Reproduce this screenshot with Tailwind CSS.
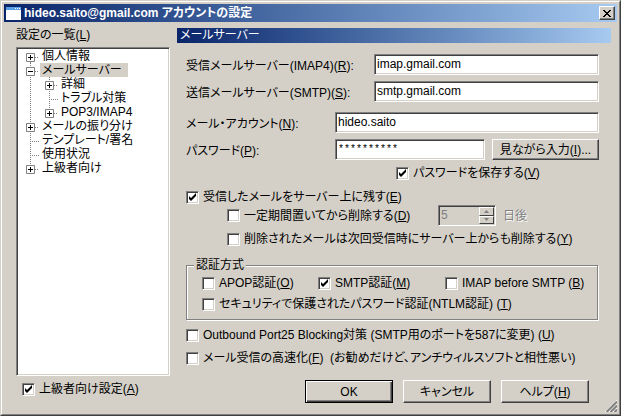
<!DOCTYPE html>
<html lang="ja">
<head>
    <meta charset="UTF-8">
    <meta name="viewport" content="width=device-width, initial-scale=1.0">
    <title>hideo.saito@gmail.com アカウントの設定</title>
    <script src="https://cdn.jsdelivr.net/npm/@tailwindcss/browser@4"></script>
</head>
<body class="bg-[#d4d0c8] text-black text-[12px] leading-[14px] font-['Liberation_Sans','Noto_Sans_CJK_JP',sans-serif] [font-feature-settings:'palt'] whitespace-nowrap">

    <!-- Shared shapes: tree expanders and the tick -->
    <svg class="hidden">
        <symbol id="line-v" viewBox="0 0 19 14"><path d="M12.5 0V14" stroke="#808080" stroke-dasharray="1 1"/></symbol>
        <symbol id="leaf" viewBox="0 0 22 14"><path d="M12.5 0V14M12 8.5H21" stroke="#808080" stroke-dasharray="1 1"/></symbol>
        <symbol id="leaf-last" viewBox="0 0 22 14"><path d="M12.5 0V9M12 8.5H21" stroke="#808080" stroke-dasharray="1 1"/></symbol>
        <symbol id="box" viewBox="0 0 22 14">
            <path d="M17 8.5H21" stroke="#808080" stroke-dasharray="1 1"/>
            <path d="M8.5 4.5h8v8h-8z" fill="#fff" stroke="#808080"/>
            <path d="M10 8.5h5" stroke="#000"/>
        </symbol>
        <symbol id="plus-first" viewBox="0 0 22 14"><path d="M12.5 13V14" stroke="#808080"/><use href="#box"/><path d="M12.5 6v5" stroke="#000"/></symbol>
        <symbol id="plus" viewBox="0 0 22 14"><path d="M12.5 0V14" stroke="#808080" stroke-dasharray="1 1"/><use href="#box"/><path d="M12.5 6v5" stroke="#000"/></symbol>
        <symbol id="plus-last" viewBox="0 0 22 14"><path d="M12.5 0V4" stroke="#808080" stroke-dasharray="1 1"/><use href="#box"/><path d="M12.5 6v5" stroke="#000"/></symbol>
        <symbol id="minus" viewBox="0 0 22 14"><path d="M12.5 0V14" stroke="#808080" stroke-dasharray="1 1"/><use href="#box"/></symbol>
        <symbol id="tick" viewBox="0 0 13 13"><path d="M3 5v3l2 2 5-5V2L5 7z" fill="#000"/></symbol>
    </svg>

    <div class="min-h-screen flex flex-col border border-t-[#d4d0c8] border-l-[#d4d0c8] border-r-[#404040] border-b-[#404040]">
        <div class="flex-1 flex flex-col border border-t-white border-l-white border-r-[#808080] border-b-[#808080] p-0.5">

            <!-- Title bar -->
            <header class="flex items-center h-[18px] pl-0.5 pr-0.5 bg-linear-to-r from-[#0a246a] to-[#a6caf0] text-white">
                <svg class="w-[15px] h-[13px]" viewBox="0 0 15 13" shape-rendering="crispEdges">
                    <path d="M0 0h15v13H0z" fill="#fff"/>
                    <path d="M0 0h15v3H0z" fill="#5aa0e8"/>
                    <path d="M9 1h1v1H9zM11 1h1v1h-1zM13 1h1v1h-1z" fill="#fff"/>
                </svg>
                <h1 class="flex-1 pl-[3px] font-bold">hideo.saito@gmail.com アカウントの設定</h1>
                <button type="button" aria-label="閉じる" class="flex items-center justify-center w-4 h-[14px] bg-[#d4d0c8] border border-t-white border-l-white border-r-[#404040] border-b-[#404040] shadow-[inset_-1px_-1px_0_#808080]">
                    <svg class="w-2 h-[7px]" viewBox="0 0 8 7" shape-rendering="crispEdges"><path d="M0 0h2v1h1v1h2V1h1V0h2v1H7v1H6v1H5v1h1v1h1v1h1v1H6V6H5V5H3v1H2v1H0V6h1V5h1V4h1V3H2V2H1V1H0z" fill="#000"/></svg>
                </button>
            </header>

            <div class="flex-1 flex gap-[7px] pt-1.5 pl-3 pr-1.5">

                <!-- Settings list -->
                <nav class="w-[154px] shrink-0 flex flex-col pb-4">
                    <span id="listLabel">設定の一覧(<u>L</u>)</span>
                    <ul aria-labelledby="listLabel" class="flex-1 mt-[5px] bg-white border border-t-[#808080] border-l-[#808080] border-r-white border-b-white shadow-[inset_1px_1px_0_#404040,inset_-1px_-1px_0_#d4d0c8] p-px">
                        <li class="flex"><svg class="w-[22px] h-[14px]"><use href="#plus-first"/></svg><span class="px-0.5">個人情報</span></li>
                        <li>
                            <div class="flex"><svg class="w-[22px] h-[14px]"><use href="#minus"/></svg><span class="pl-0.5 pr-1.5 bg-[#d4d0c8]">メールサーバー</span></div>
                            <ul>
                                <li class="flex"><svg class="w-[19px] h-[14px]"><use href="#line-v"/></svg><svg class="w-[22px] h-[14px]"><use href="#plus"/></svg><span class="px-0.5">詳細</span></li>
                                <li class="flex"><svg class="w-[19px] h-[14px]"><use href="#line-v"/></svg><svg class="w-[22px] h-[14px]"><use href="#leaf"/></svg><span class="px-0.5">トラブル対策</span></li>
                                <li class="flex"><svg class="w-[19px] h-[14px]"><use href="#line-v"/></svg><svg class="w-[22px] h-[14px]"><use href="#plus-last"/></svg><span class="px-0.5">POP3/IMAP4</span></li>
                            </ul>
                        </li>
                        <li class="flex"><svg class="w-[22px] h-[14px]"><use href="#plus"/></svg><span class="px-0.5">メールの振り分け</span></li>
                        <li class="flex"><svg class="w-[22px] h-[14px]"><use href="#leaf"/></svg><span class="px-0.5">テンプレート/署名</span></li>
                        <li class="flex"><svg class="w-[22px] h-[14px]"><use href="#leaf"/></svg><span class="px-0.5">使用状況</span></li>
                        <li class="flex"><svg class="w-[22px] h-[14px]"><use href="#plus-last"/></svg><span class="px-0.5">上級者向け</span></li>
                    </ul>
                    <label class="flex items-center gap-1 mt-1.5 pl-1.5">
                        <span class="grid"><input type="checkbox" checked class="peer [grid-area:1/1] appearance-none w-[13px] h-[13px] bg-white border border-t-[#808080] border-l-[#808080] border-r-white border-b-white shadow-[inset_1px_1px_0_#404040,inset_-1px_-1px_0_#d4d0c8]"><svg class="[grid-area:1/1] w-[13px] h-[13px] pointer-events-none invisible peer-checked:visible"><use href="#tick"/></svg></span>
                        <span>上級者向け設定(<u>A</u>)</span>
                    </label>
                </nav>

                <!-- Mail server page -->
                <main class="flex-1 min-w-0 flex flex-col">
                    <h2 class="h-[15px] pl-[3px] bg-linear-to-r from-[#0a246a] to-[#a6caf0] text-white">メールサーバー</h2>

                    <form class="flex flex-col pl-[9px] pr-3 pt-[11px]">
                        <div class="grid grid-cols-[188px_1fr] gap-y-1.5 items-center">
                            <label for="imap" class="pt-0.5">受信メールサーバー(IMAP4)(<u>R</u>):</label>
                            <input id="imap" type="text" value="imap.gmail.com" class="w-full h-[21px] pl-0.5 pb-px bg-white border border-t-[#808080] border-l-[#808080] border-r-white border-b-white shadow-[inset_1px_1px_0_#404040,inset_-1px_-1px_0_#d4d0c8] outline-none">
                            <label for="smtp" class="pt-0.5">送信メールサーバー(SMTP)(<u>S</u>):</label>
                            <input id="smtp" type="text" value="smtp.gmail.com" class="w-full h-[21px] pl-0.5 pb-px bg-white border border-t-[#808080] border-l-[#808080] border-r-white border-b-white shadow-[inset_1px_1px_0_#404040,inset_-1px_-1px_0_#d4d0c8] outline-none">
                        </div>

                        <div class="grid grid-cols-[149px_1fr] gap-y-1.5 items-center mt-2.5">
                            <label for="account" class="pt-0.5">メール・アカウント(<u>N</u>):</label>
                            <input id="account" type="text" value="hideo.saito" class="w-full h-[21px] pl-0.5 pb-px bg-white border border-t-[#808080] border-l-[#808080] border-r-white border-b-white shadow-[inset_1px_1px_0_#404040,inset_-1px_-1px_0_#d4d0c8] outline-none">
                            <label for="password" class="pt-0.5">パスワード(<u>P</u>):</label>
                            <div class="flex gap-[7px]">
                                <input id="password" type="text" value="**********" class="flex-1 min-w-0 h-[21px] pl-0.5 font-['Liberation_Mono',monospace] text-[10px] bg-white border border-t-[#808080] border-l-[#808080] border-r-white border-b-white shadow-[inset_1px_1px_0_#404040,inset_-1px_-1px_0_#d4d0c8] outline-none">
                                <button type="button" class="w-[107px] h-[21px] border border-t-white border-l-white border-r-[#404040] border-b-[#404040] shadow-[inset_-1px_-1px_0_#808080]">見ながら入力(<u>I</u>)...</button>
                            </div>
                        </div>

                        <label class="flex items-center gap-1 mt-1.5 pl-[210px]">
                            <span class="grid"><input type="checkbox" checked class="peer [grid-area:1/1] appearance-none w-[13px] h-[13px] bg-white border border-t-[#808080] border-l-[#808080] border-r-white border-b-white shadow-[inset_1px_1px_0_#404040,inset_-1px_-1px_0_#d4d0c8]"><svg class="[grid-area:1/1] w-[13px] h-[13px] pointer-events-none invisible peer-checked:visible"><use href="#tick"/></svg></span>
                            <span>パスワードを保存する(<u>V</u>)</span>
                        </label>

                        <label class="flex items-center gap-1 mt-2.5">
                            <span class="grid"><input type="checkbox" checked class="peer [grid-area:1/1] appearance-none w-[13px] h-[13px] bg-white border border-t-[#808080] border-l-[#808080] border-r-white border-b-white shadow-[inset_1px_1px_0_#404040,inset_-1px_-1px_0_#d4d0c8]"><svg class="[grid-area:1/1] w-[13px] h-[13px] pointer-events-none invisible peer-checked:visible"><use href="#tick"/></svg></span>
                            <span>受信したメールをサーバー上に残す(<u>E</u>)</span>
                        </label>
                        <div class="grid grid-cols-[211px_58px_auto] items-center mt-px pl-[41px]">
                            <label class="flex items-center gap-1">
                                <input type="checkbox" class="appearance-none w-[13px] h-[13px] bg-white border border-t-[#808080] border-l-[#808080] border-r-white border-b-white shadow-[inset_1px_1px_0_#404040,inset_-1px_-1px_0_#d4d0c8]">
                                <span>一定期間置いてから削除する(<u>D</u>)</span>
                            </label>
                            <div class="flex h-[21px] border border-t-[#808080] border-l-[#808080] border-r-white border-b-white shadow-[inset_1px_1px_0_#404040] p-px">
                                <input id="days" type="text" value="5" disabled class="flex-1 min-w-0 pl-px pb-0.5 text-[#808080]">
                                <div class="flex flex-col w-[15px]">
                                    <button type="button" disabled aria-label="増やす" class="flex-1 flex items-center justify-center border border-t-white border-l-white border-r-[#404040] border-b-[#404040]"><svg class="w-[5px] h-[3px]" viewBox="0 0 5 3"><path d="M2.500 0L5 3H0z" fill="#808080"/></svg></button>
                                    <button type="button" disabled aria-label="減らす" class="flex-1 flex items-center justify-center border border-t-white border-l-white border-r-[#404040] border-b-[#404040]"><svg class="w-[5px] h-[3px]" viewBox="0 0 5 3"><path d="M0 0h5L2.500 3z" fill="#808080"/></svg></button>
                                </div>
                            </div>
                            <label for="days" class="pl-[7px] text-[#808080] [text-shadow:1px_1px_0_#fff]">日後</label>
                        </div>
                        <label class="flex items-center gap-1 mt-1.5 pl-[41px]">
                            <input type="checkbox" class="appearance-none w-[13px] h-[13px] bg-white border border-t-[#808080] border-l-[#808080] border-r-white border-b-white shadow-[inset_1px_1px_0_#404040,inset_-1px_-1px_0_#d4d0c8]">
                            <span>削除されたメールは次回受信時にサーバー上からも削除する(<u>Y</u>)</span>
                        </label>

                        <!-- Authentication -->
                        <fieldset class="mt-3 mr-px border border-[#808080] shadow-[1px_1px_0_#fff,inset_1px_1px_0_#fff] pl-[15px] pt-1 pb-2">
                            <legend class="-ml-2 px-0.5 bg-[#d4d0c8]">認証方式</legend>
                            <div class="grid grid-cols-[116px_127px_auto]">
                                <label class="flex items-center gap-1">
                                    <input type="checkbox" class="appearance-none w-[13px] h-[13px] bg-white border border-t-[#808080] border-l-[#808080] border-r-white border-b-white shadow-[inset_1px_1px_0_#404040,inset_-1px_-1px_0_#d4d0c8]">
                                    <span>APOP認証(<u>O</u>)</span>
                                </label>
                                <label class="flex items-center gap-1">
                                    <span class="grid"><input type="checkbox" checked class="peer [grid-area:1/1] appearance-none w-[13px] h-[13px] bg-white border border-t-[#808080] border-l-[#808080] border-r-white border-b-white shadow-[inset_1px_1px_0_#404040,inset_-1px_-1px_0_#d4d0c8]"><svg class="[grid-area:1/1] w-[13px] h-[13px] pointer-events-none invisible peer-checked:visible"><use href="#tick"/></svg></span>
                                    <span>SMTP認証(<u>M</u>)</span>
                                </label>
                                <label class="flex items-center gap-1">
                                    <input type="checkbox" class="appearance-none w-[13px] h-[13px] bg-white border border-t-[#808080] border-l-[#808080] border-r-white border-b-white shadow-[inset_1px_1px_0_#404040,inset_-1px_-1px_0_#d4d0c8]">
                                    <span>IMAP before SMTP (<u>B</u>)</span>
                                </label>
                            </div>
                            <label class="flex items-center gap-1 mt-[7px]">
                                <input type="checkbox" class="appearance-none w-[13px] h-[13px] bg-white border border-t-[#808080] border-l-[#808080] border-r-white border-b-white shadow-[inset_1px_1px_0_#404040,inset_-1px_-1px_0_#d4d0c8]">
                                <span>セキュリティで保護されたパスワード認証(NTLM認証) (<u>T</u>)</span>
                            </label>
                        </fieldset>

                        <label class="flex items-center gap-1 mt-2">
                            <input type="checkbox" class="appearance-none w-[13px] h-[13px] bg-white border border-t-[#808080] border-l-[#808080] border-r-white border-b-white shadow-[inset_1px_1px_0_#404040,inset_-1px_-1px_0_#d4d0c8]">
                            <span>Outbound Port25 Blocking対策 (SMTP用のポートを587に変更) (<u>U</u>)</span>
                        </label>
                        <label class="flex items-center gap-1 mt-[9px]">
                            <input type="checkbox" class="appearance-none w-[13px] h-[13px] bg-white border border-t-[#808080] border-l-[#808080] border-r-white border-b-white shadow-[inset_1px_1px_0_#404040,inset_-1px_-1px_0_#d4d0c8]">
                            <span>メール受信の高速化(<u>F</u>)&nbsp; (お勧めだけど、アンチウィルスソフトと相性悪い)</span>
                        </label>

                        <div class="flex justify-end gap-2.5 mt-[15px] pr-2.5">
                            <button type="submit" class="w-[88px] h-[23px] border border-black shadow-[inset_1px_1px_0_#fff,inset_-1px_-1px_0_#404040,inset_-2px_-2px_0_#808080]">OK</button>
                            <button type="button" class="w-[88px] h-[23px] border border-t-white border-l-white border-r-[#404040] border-b-[#404040] shadow-[inset_-1px_-1px_0_#808080]">キャンセル</button>
                            <button type="button" class="w-[88px] h-[23px] border border-t-white border-l-white border-r-[#404040] border-b-[#404040] shadow-[inset_-1px_-1px_0_#808080]">ヘルプ(<u>H</u>)</button>
                        </div>
                    </form>
                </main>
            </div>
        </div>
    </div>

    <!-- Resize grip -->
    <svg class="absolute right-1 bottom-1 w-3 h-3" viewBox="0 0 12 12">
        <path d="M0 12L12 0M4 12l8-8M8 12l4-4" stroke="#fff"/>
        <path d="M1.500 12L12 1.500M5.500 12L12 5.500M9.500 12L12 9.500" stroke="#808080" stroke-width="2"/>
    </svg>
</body>
</html>
